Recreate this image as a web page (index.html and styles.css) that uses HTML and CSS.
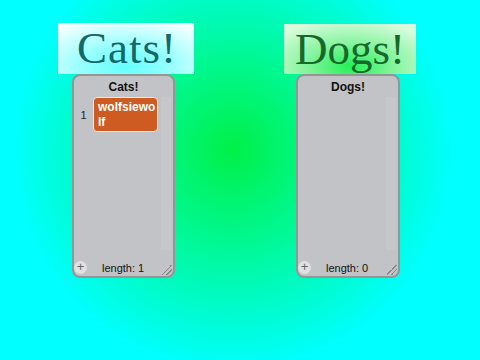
FILE: index.html
```html
<!DOCTYPE html>
<html lang="en">
<head>
    <meta charset="UTF-8">
    <title>Cats and Dogs</title>
    <link rel="stylesheet" href="styles.css">
</head>
<body>
    <div class="stage">
        <div class="group cats">
            <div class="label">Cats!</div>
            <div class="monitor">
                <div class="monitor-title">Cats!</div>
                <div class="monitor-body">
                    <div class="rows">
                        <div class="row">
                            <span class="index">1</span>
                            <span class="item">wolfsiewolf</span>
                        </div>
                    </div>
                    <div class="scrollbar"></div>
                </div>
                <div class="monitor-footer">
                    <span class="add">+</span>
                    <span class="length">length: 1</span>
                    <span class="grip"></span>
                </div>
            </div>
        </div>
        <div class="group dogs">
            <div class="label">Dogs!</div>
            <div class="monitor">
                <div class="monitor-title">Dogs!</div>
                <div class="monitor-body">
                    <div class="rows"></div>
                    <div class="scrollbar"></div>
                </div>
                <div class="monitor-footer">
                    <span class="add">+</span>
                    <span class="length">length: 0</span>
                    <span class="grip"></span>
                </div>
            </div>
        </div>
    </div>
</body>
</html>
```

FILE: styles.css
```css
* {
    margin: 0;
    padding: 0;
    box-sizing: border-box;
}

body {
    width: 480px;
    height: 360px;
    overflow: hidden;
    font-family: "Liberation Sans", Arial, sans-serif;
}

.stage {
    width: 480px;
    height: 360px;
    background: radial-gradient(circle at 233px 150px, #00f048 0, #00f890 90px, #00ffff 220px);
    display: flex;
    padding: 23px 0 0 58px;
}

.group {
    display: flex;
    flex-direction: column;
}

.cats {
    width: 136px;
    align-items: center;
}

.dogs {
    width: 132px;
    margin-left: 90px;
    align-items: center;
}

.label {
    height: 51px;
    width: 100%;
    font-family: "Liberation Serif", "Times New Roman", serif;
    font-size: 45px;
    line-height: 50px;
    text-align: center;
}

.cats .label {
    background: radial-gradient(ellipse 75% 95% at 50% 85%, #66ffff 0, #99ffff 45%, #f4ffff 100%);
    color: #12696a;
    letter-spacing: 1px;
    padding-left: 2px;
}

.dogs .label {
    background: radial-gradient(ellipse 70% 95% at 50% 85%, #22f055 0, #80f49a 45%, #d8fbdc 100%);
    color: #15692a;
    margin-top: 1px;
    height: 50px;
}

.monitor {
    width: 103px;
    height: 204px;
    background: #c1c3c6;
    border: 2px solid #959595;
    border-radius: 8px;
    display: flex;
    flex-direction: column;
    position: relative;
}

.cats .monitor {
    margin-right: 5px;
}

.dogs .monitor {
    width: 104px;
    margin-right: 4px;
}

.monitor-title {
    font-size: 12px;
    font-weight: bold;
    color: #111;
    text-align: center;
    line-height: 14px;
    padding-top: 4px;
}

.monitor-body {
    flex: 1;
    display: flex;
    padding-top: 3px;
}

.rows {
    flex: 1;
}

.row {
    display: flex;
    align-items: center;
}

.index {
    width: 19px;
    font-size: 11px;
    color: #222;
    text-align: center;
}

.item {
    width: 65px;
    height: 35px;
    background: #cd5b22;
    border: 1px solid #f3e6dc;
    border-radius: 4px;
    color: #fff;
    font-size: 12px;
    font-weight: bold;
    line-height: 15px;
    padding: 2px 1px 2px 4px;
    word-break: break-all;
}

.scrollbar {
    width: 10px;
    margin: 0 2px 6px 0;
    background: #c5c7ca;
}

.monitor-footer {
    height: 20px;
    display: flex;
    align-items: center;
    padding-top: 3px;
}

.add {
    width: 13px;
    height: 13px;
    border-radius: 50%;
    background: #dfe0e2;
    color: #666;
    font-size: 13px;
    line-height: 12px;
    text-align: center;
}

.length {
    font-size: 11px;
    color: #111;
    margin-left: 15px;
}

.grip {
    position: absolute;
    right: 1px;
    bottom: 1px;
    width: 10px;
    height: 10px;
    background: linear-gradient(135deg, transparent 45%, #888 45%, #888 52%, transparent 52%, transparent 68%, #888 68%, #888 75%, transparent 75%);
}
```
